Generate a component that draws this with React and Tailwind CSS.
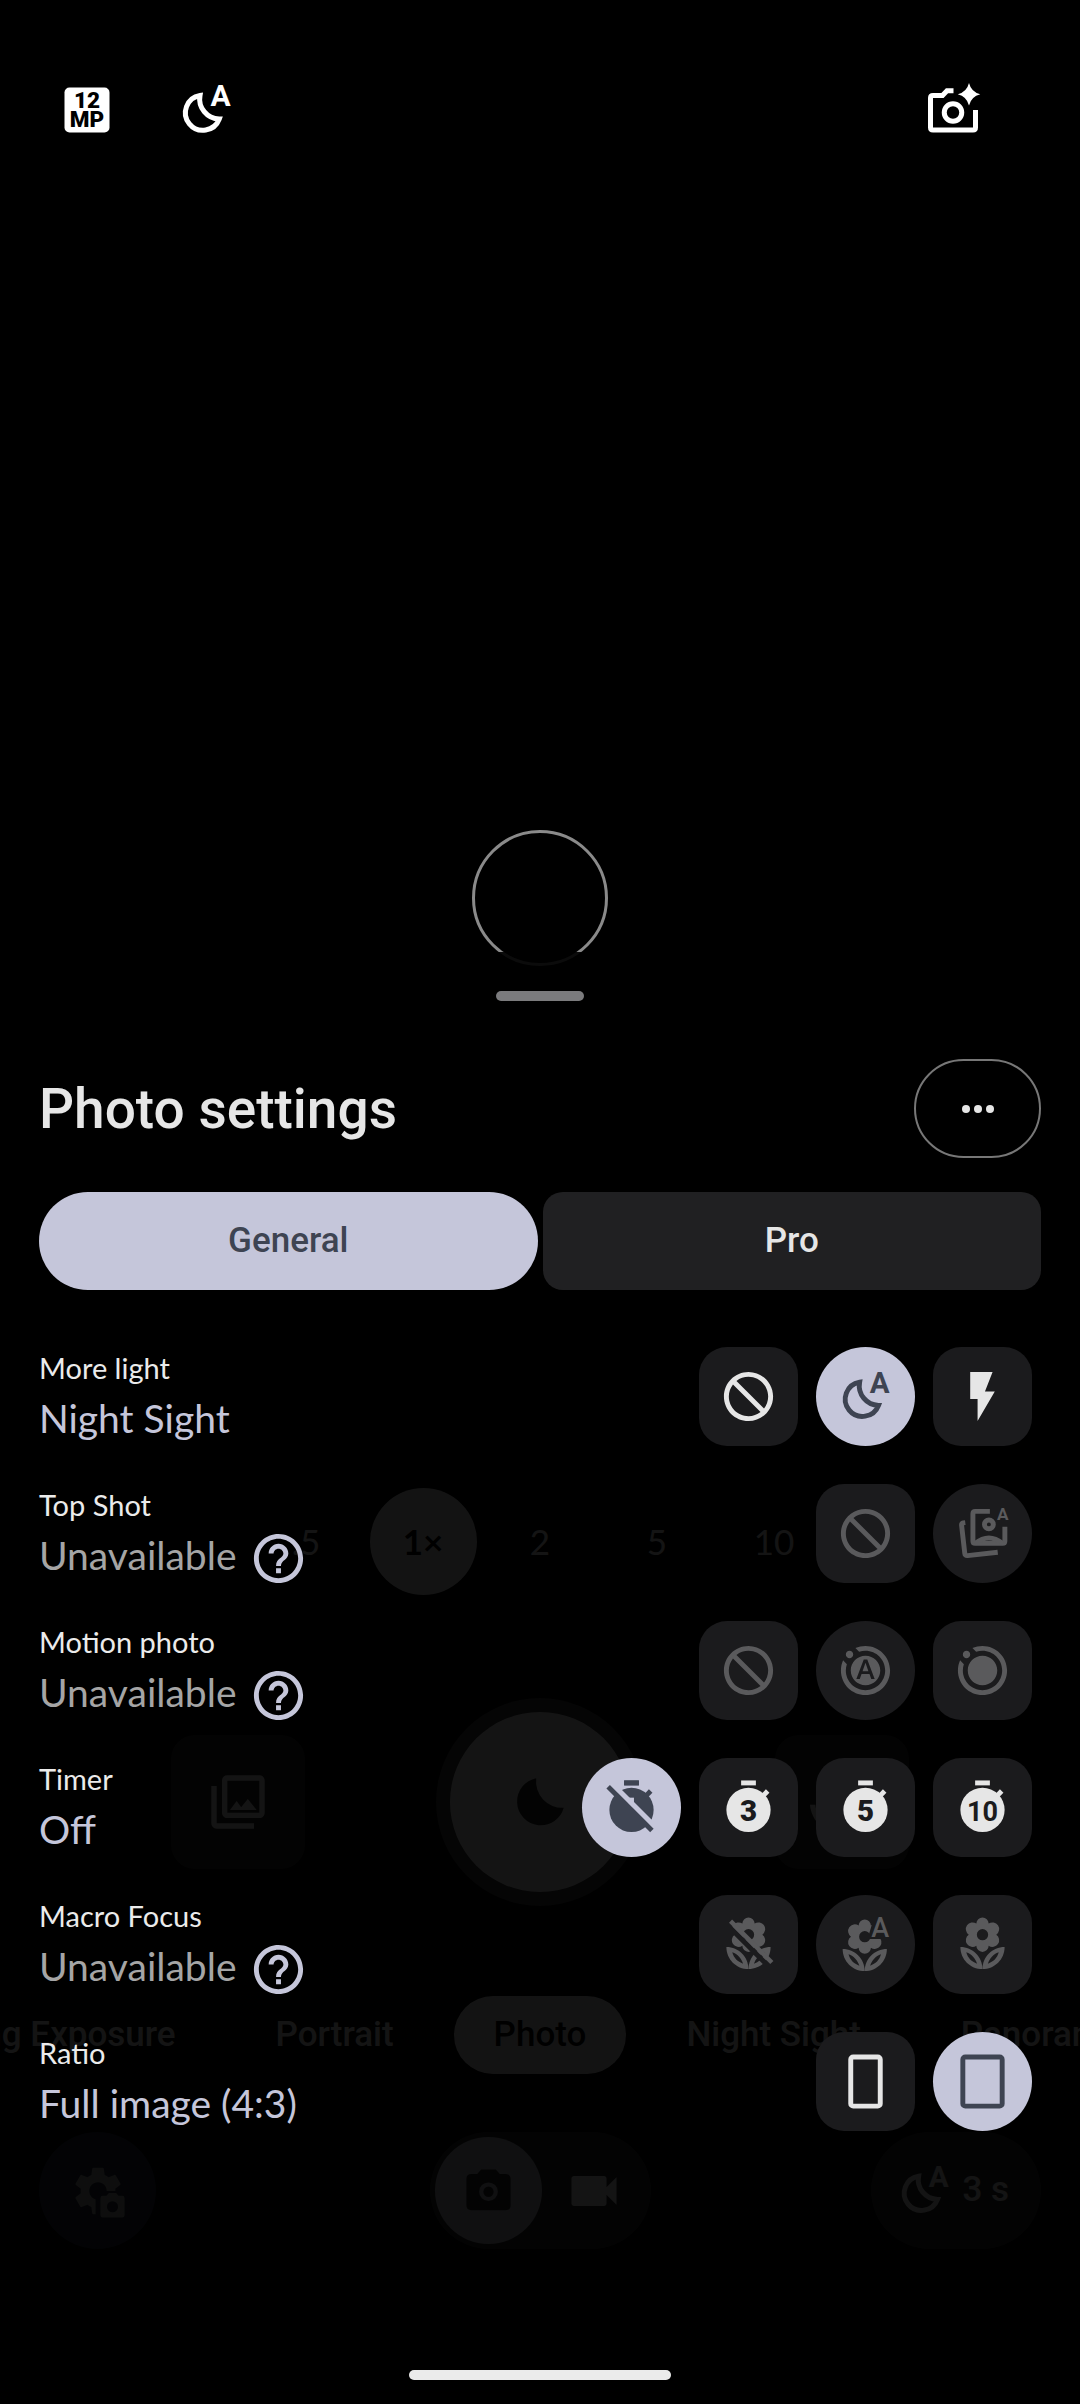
import { useState } from 'react';
import {
  MdBlock,
  MdHelpOutline,
  MdMotionPhotosAuto,
  MdMotionPhotosOn,
  MdOutlineCameraswitch,
  MdOutlinePhotoLibrary,
  MdVideocam,
} from 'react-icons/md';

const GEAR =
  'M19.14 12.94c.04-.3.06-.61.06-.94 0-.32-.02-.64-.07-.94l2.03-1.58c.18-.14.23-.41.12-.61l-1.92-3.32c-.12-.22-.37-.29-.59-.22l-2.39.96c-.5-.38-1.03-.7-1.62-.94l-.36-2.54c-.04-.24-.24-.41-.48-.41h-3.84c-.24 0-.43.17-.47.41l-.36 2.54c-.59.24-1.13.57-1.62.94l-2.39-.96c-.22-.08-.47 0-.59.22L2.74 8.87c-.12.21-.08.47.12.61l2.03 1.58c-.05.3-.09.63-.09.94s.02.64.07.94l-2.03 1.58c-.18.14-.23.41-.12.61l1.92 3.32c.12.22.37.29.59.22l2.39-.96c.5.38 1.03.7 1.62.94l.36 2.54c.05.24.24.41.48.41h3.84c.24 0 .44-.17.47-.41l.36-2.54c.59-.24 1.13-.56 1.62-.94l2.39.96c.22.08.47 0 .59-.22l1.92-3.32c.12-.22.07-.47-.12-.61l-2.01-1.58zM12 15.6c-1.98 0-3.6-1.62-3.6-3.6s1.62-3.6 3.6-3.6 3.6 1.62 3.6 3.6-1.62 3.6-3.6 3.6z';

function Icon({ children, className = 'size-[59px]' }) {
  return (
    <svg viewBox="0 0 24 24" fill="currentColor" className={className} aria-hidden="true">
      {children}
    </svg>
  );
}

function MegapixelIcon({ className }) {
  return (
    <Icon className={className}>
      <rect x="3" y="3" width="18" height="18" rx="2" />
      <g className="fill-black font-[Roboto,sans-serif] text-[9px] font-black" textAnchor="middle">
        <text x="12" y="11.3">12</text>
        <text x="12" y="18.8">MP</text>
      </g>
    </Icon>
  );
}

function NightAutoIcon({ className = 'size-[59px]' }) {
  return (
    <Icon className={className}>
      <path
        d="M9.6 6.2A7 7 0 1 0 17.3 15.6A8 8 0 0 1 9.6 6.2Z"
        fill="none"
        stroke="currentColor"
        strokeWidth="2"
      />
      <text x="17.8" y="10.5" textAnchor="middle" className="font-[Roboto,sans-serif] text-[12px] font-bold">A</text>
    </Icon>
  );
}

function CameraSparkIcon({ className }) {
  return (
    <Icon className={className}>
      <g fill="none" stroke="currentColor" strokeWidth="2">
        <path d="M12.2 4.3H9.6L7.8 6.2H4Q3 6.2 3 7.2V19Q3 20 4 20H20Q21 20 21 19V12" />
        <circle cx="12" cy="13" r="3.5" />
      </g>
      <path d="M18.4 1.2Q19.3 4.8 22.9 5.7Q19.3 6.6 18.4 10.2Q17.5 6.6 13.9 5.7Q17.5 4.8 18.4 1.2Z" />
    </Icon>
  );
}

function FlashIcon() {
  return (
    <Icon>
      <path d="M7 2v11h3v9l7-12h-4l3.1-8z" />
    </Icon>
  );
}

function TopShotAutoIcon() {
  return (
    <Icon>
      <g fill="none" stroke="currentColor" strokeWidth="2">
        <path d="M15 3H9Q8.1 3 8.1 4V15Q8.1 16 9 16H20.2Q21.1 16 21.1 15V9.3" />
        <circle cx="14.6" cy="8.3" r="1.8" />
        <path d="M9 16Q14.6 11.6 20.2 16" />
        <path d="M5 7.6L4.2 7.7Q3.4 7.9 3.5 8.7L4.8 20.1Q4.9 21.1 5.9 21L18.2 19.6" />
      </g>
      <text x="20.2" y="6.6" textAnchor="middle" className="font-[Roboto,sans-serif] text-[7px] font-bold">A</text>
    </Icon>
  );
}

function Stopwatch() {
  return (
    <>
      <rect x="9" y="1" width="6" height="2" />
      <circle cx="12" cy="13" r="9" />
      <path d="M17.2 8L19.8 5.3" stroke="currentColor" strokeWidth="2" />
    </>
  );
}

function TimerIcon({ seconds }) {
  return (
    <Icon>
      <Stopwatch />
      <text
        x="12"
        y="17.3"
        textAnchor="middle"
        className={
          seconds > 9
            ? 'fill-[#1b1b1d] font-[Liberation_Sans_Narrow,Roboto,sans-serif] text-[11px] font-bold'
            : 'fill-[#1b1b1d] font-[Roboto,sans-serif] text-[12px] font-black'
        }
      >
        {seconds}
      </text>
    </Icon>
  );
}

function TimerOffIcon() {
  return (
    <Icon>
      <mask id="timer-off">
        <rect width="24" height="24" fill="white" />
        <path d="M3 1.3L23 21.3" stroke="black" strokeWidth="2.2" />
        <rect x="10.6" y="8" width="2.4" height="4" fill="black" />
      </mask>
      <g mask="url(#timer-off)">
        <Stopwatch />
      </g>
      <rect x="9" y="1" width="6" height="2" />
      <path d="M2.5 3.6L20.3 21.4" stroke="currentColor" strokeWidth="2" />
    </Icon>
  );
}

function Flower() {
  return (
    <>
      <path
        fillRule="evenodd"
        d="M12 1A2.6 2.6 0 0 1 14.5 3.5A2.5 2.5 0 0 1 17.6 8A2.5 2.5 0 0 1 14.5 12.5A2.5 2.5 0 0 1 9.5 12.5A2.5 2.5 0 0 1 6.4 8A2.5 2.5 0 0 1 9.5 3.5A2.6 2.6 0 0 1 12 1ZM12 5.7A2.3 2.3 0 1 0 12 10.3A2.3 2.3 0 1 0 12 5.7Z"
      />
      <path
        fillRule="evenodd"
        d="M12 22C12 17 8 13 3 13C3 18 7 22 12 22ZM5.4 15.2C7.6 16 9.1 17.7 9.8 19.8C7.6 19.1 6 17.5 5.4 15.2Z"
      />
      <path
        fillRule="evenodd"
        d="M12 22C12 17 16 13 21 13C21 18 17 22 12 22ZM18.6 15.2C16.4 16 14.9 17.7 14.2 19.8C16.4 19.1 18 17.5 18.6 15.2Z"
      />
    </>
  );
}

function MacroIcon() {
  return (
    <Icon>
      <Flower />
    </Icon>
  );
}

function MacroAutoIcon() {
  return (
    <Icon>
      <mask id="macro-auto">
        <rect width="24" height="24" fill="white" />
        <path d="M15.800 0H24V9.800H12.800Z" fill="black" />
      </mask>
      <g mask="url(#macro-auto)">
        <g transform="translate(-0.3 0.8)">
          <Flower />
        </g>
      </g>
      <text x="18" y="9" textAnchor="middle" className="font-[Roboto,sans-serif] text-[11px] font-medium">A</text>
    </Icon>
  );
}

function MacroOffIcon() {
  return (
    <Icon>
      <mask id="macro-off">
        <rect width="24" height="24" fill="white" />
        <path d="M3 3.7L21 21.7" stroke="black" strokeWidth="2" />
      </mask>
      <g mask="url(#macro-off)">
        <Flower />
      </g>
      <path d="M4.7 2.5L21.5 19.3" stroke="currentColor" strokeWidth="1.8" />
    </Icon>
  );
}

function RatioIcon({ wide }) {
  return (
    <Icon>
      <rect
        x={wide ? 4 : 6}
        y="2"
        width={wide ? 16 : 12}
        height="20"
        rx="1"
        fill="none"
        stroke="currentColor"
        strokeWidth="2"
      />
    </Icon>
  );
}

function CameraSettingsIcon() {
  return (
    <Icon className="size-[58px]">
      <mask id="gear-cut">
        <rect width="24" height="24" fill="white" />
        <path d="M11 12H24V24H11Z" fill="black" />
      </mask>
      <path d={GEAR} mask="url(#gear-cut)" />
      <path
        fillRule="evenodd"
        d="M14 14h1.5l1-1.2h3l1 1.2H22q1 0 1 1v7q0 1-1 1h-8q-1 0-1-1v-7q0-1 1-1zM18 16.2a2.3 2.3 0 1 0 0 4.6a2.3 2.3 0 1 0 0-4.6z"
      />
    </Icon>
  );
}

function PhotoIcon() {
  return (
    <Icon>
      <path
        fillRule="evenodd"
        d="M9 3.5h6l1.6 1.8H19q2 0 2 2V18q0 2-2 2H5q-2 0-2-2V7.300q0-2 2-2h2.400zM12 8.700a3.800 3.800 0 1 0 0 7.600a3.800 3.800 0 1 0 0-7.600z"
      />
      <circle cx="12" cy="12.5" r="2.1" />
    </Icon>
  );
}

const block = { label: 'Off', icon: <MdBlock className="size-[59px] rotate-90" /> };

const settings = [
  {
    name: 'More light',
    selected: 1,
    values: ['Off', 'Night Sight', 'Flash'],
    options: [block, { label: 'Night Sight', icon: <NightAutoIcon /> }, { label: 'Flash', icon: <FlashIcon /> }],
  },
  {
    name: 'Top Shot',
    selected: 1,
    disabled: true,
    options: [block, { label: 'Auto', icon: <TopShotAutoIcon /> }],
  },
  {
    name: 'Motion photo',
    selected: 1,
    disabled: true,
    options: [
      block,
      { label: 'Auto', icon: <MdMotionPhotosAuto className="size-[59px]" /> },
      { label: 'On', icon: <MdMotionPhotosOn className="size-[59px]" /> },
    ],
  },
  {
    name: 'Timer',
    selected: 0,
    values: ['Off', '3 seconds', '5 seconds', '10 seconds'],
    options: [
      { label: 'Off', icon: <TimerOffIcon /> },
      { label: '3 seconds', icon: <TimerIcon seconds={3} /> },
      { label: '5 seconds', icon: <TimerIcon seconds={5} /> },
      { label: '10 seconds', icon: <TimerIcon seconds={10} /> },
    ],
  },
  {
    name: 'Macro Focus',
    selected: 1,
    disabled: true,
    options: [
      { label: 'Off', icon: <MacroOffIcon /> },
      { label: 'Auto', icon: <MacroAutoIcon /> },
      { label: 'On', icon: <MacroIcon /> },
    ],
  },
  {
    name: 'Ratio',
    selected: 1,
    values: ['Wide crop (16:9)', 'Full image (4:3)'],
    options: [
      { label: 'Wide crop (16:9)', icon: <RatioIcon /> },
      { label: 'Full image (4:3)', icon: <RatioIcon wide /> },
    ],
  },
];

function optionClass(isSelected, disabled) {
  if (disabled) {
    return isSelected
      ? 'rounded-full bg-[#1b1b1d] text-[#5a5a5c]'
      : 'rounded-[28px] bg-[#1b1b1d] text-[#5a5a5c]';
  }
  return isSelected
    ? 'rounded-full bg-[#c5c6da] text-[#3e4452]'
    : 'rounded-[28px] bg-[#1b1b1d] text-[#e6e6e6]';
}

function SettingRow({ setting }) {
  const [selected, setSelected] = useState(setting.selected);

  return (
    <div className="flex h-[99px] items-center justify-between">
      <div>
        <p className="text-[29px] leading-[42px] text-[#ebebeb]">{setting.name}</p>
        {setting.disabled ? (
          <div className="flex items-end gap-3 text-[39px] leading-[58px] text-[#a5a5a5]">
            Unavailable
            <button aria-label={`Why is ${setting.name} unavailable?`} className="text-[#c5c6da]">
              <MdHelpOutline className="-my-1 size-[59px]" />
            </button>
          </div>
        ) : (
          <p className="text-[39px] leading-[58px] text-[#c5c6da]">{setting.values[selected]}</p>
        )}
      </div>
      <div className="flex gap-[18px]">
        {setting.options.map((option, i) => (
          <button
            key={option.label}
            aria-label={`${setting.name}: ${option.label}`}
            aria-pressed={i === selected}
            disabled={setting.disabled}
            onClick={() => setSelected(i)}
            className={`flex size-[99px] items-center justify-center ${optionClass(i === selected, setting.disabled)}`}
          >
            {option.icon}
          </button>
        ))}
      </div>
    </div>
  );
}

function CameraScreen() {
  return (
    <div className="text-[35px] text-white">
      <header className="flex items-center px-[57px] pt-20 pb-[38px]">
        <MegapixelIcon className="size-[60px]" />
        <NightAutoIcon className="ml-[59px] size-[60px]" />
        <CameraSparkIcon className="mr-10 ml-auto size-[60px]" />
      </header>

      {/* viewfinder */}
      <div className="relative flex aspect-[3/4] items-center justify-center">
        <div className="size-[136px] rounded-full border-3 border-[#8a8a8a]" />
        <div className="absolute inset-x-0 bottom-[23px] flex items-center justify-center">
          <button className="w-[117px]">.5</button>
          <button className="mx-[5px] size-[107px] rounded-full bg-[#f0f0f0] font-bold text-black">1×</button>
          <button className="w-[117px]">2</button>
          <button className="w-[117px]">5</button>
          <button className="w-[117px]">10</button>
        </div>
      </div>

      <div className="mt-20 flex items-center justify-center gap-[131px]">
        <button aria-label="Gallery" className="flex size-[134px] items-center justify-center rounded-3xl bg-[#303030]">
          <MdOutlinePhotoLibrary className="size-16" />
        </button>
        <button aria-label="Take photo" className="rounded-full bg-[#404040] p-3.5">
          <span className="flex size-[180px] items-center justify-center rounded-full bg-white text-[#303030]">
            <Icon className="size-[60px]">
              <path d="M10.5 2.5A9.5 9.5 0 1 0 21.5 14.3A10.5 10.5 0 0 1 10.5 2.5Z" />
            </Icon>
          </span>
        </button>
        <button aria-label="Switch camera" className="flex size-[134px] items-center justify-center rounded-3xl bg-[#303030]">
          <MdOutlineCameraswitch className="size-16" />
        </button>
      </div>

      <nav className="mt-[90px] grid grid-cols-[1fr_auto_1fr] items-center gap-5 overflow-hidden font-[Roboto,sans-serif] font-medium whitespace-nowrap">
        <div className="flex min-w-0 justify-end gap-5">
          <button className="px-10">Long Exposure</button>
          <button className="px-10">Portrait</button>
        </div>
        <button className="h-[78px] rounded-full bg-[#f0f0f0] px-10 text-black">Photo</button>
        <div className="flex min-w-0 gap-5">
          <button className="px-10">Night Sight</button>
          <button className="px-10">Panorama</button>
        </div>
      </nav>

      <div className="mt-[58px] grid grid-cols-[1fr_auto_1fr] items-center px-[39px]">
        <button
          aria-label="Camera settings"
          className="flex size-[117px] items-center justify-center rounded-full bg-[#263040] text-[#b0b0b0]"
        >
          <CameraSettingsIcon />
        </button>
        <div className="flex h-[117px] items-center rounded-full bg-[#303030] p-[5px]">
          <button
            aria-label="Photo mode"
            className="flex size-[107px] items-center justify-center rounded-full bg-[#c8ccd8] text-[#303030]"
          >
            <PhotoIcon />
          </button>
          <button aria-label="Video mode" className="flex w-[104px] justify-center">
            <MdVideocam className="size-[60px]" />
          </button>
        </div>
        <button className="flex h-[117px] items-center gap-2 justify-self-end rounded-full bg-[#303030] pr-8 pl-6 font-[Roboto,sans-serif] font-medium">
          <NightAutoIcon />
          3 s
        </button>
      </div>
    </div>
  );
}

export default function App() {
  const [tab, setTab] = useState('General');

  return (
    <div className="relative min-h-screen overflow-hidden bg-black font-[Lato,sans-serif]">
      <CameraScreen />

      {/* settings sheet */}
      <section className="absolute inset-x-0 bottom-0 bg-black/92 pt-[39px] pb-6">
        <div className="mx-auto h-2.5 w-[88px] rounded-full bg-[#7b7b7d]" />

        <div className="mx-[39px] mt-[58px] flex items-center justify-between">
          <h1 className="font-[Roboto,sans-serif] text-[55px] leading-[64px] font-medium text-[#e6e6e6]">
            Photo settings
          </h1>
          <button
            aria-label="More settings"
            className="flex h-[99px] w-[127px] items-center justify-center gap-[4px] rounded-full border-2 border-[#777777]"
          >
            <span className="size-2 rounded-full bg-[#e6e6e6]" />
            <span className="size-2 rounded-full bg-[#e6e6e6]" />
            <span className="size-2 rounded-full bg-[#e6e6e6]" />
          </button>
        </div>

        <div className="mx-[39px] mt-[34px] grid grid-cols-2 gap-[5px]">
          {['General', 'Pro'].map(name => (
            <button
              key={name}
              aria-pressed={tab === name}
              onClick={() => setTab(name)}
              className={`h-[98px] font-[Roboto,sans-serif] text-[35px] font-medium ${
                tab === name
                  ? 'rounded-full bg-[#c5c6da] text-[#3e4452]'
                  : 'rounded-[20px] bg-[#202022] text-[#e6e6e6]'
              }`}
            >
              {name}
            </button>
          ))}
        </div>

        <div className="mt-[57px] mr-12 ml-[39px] flex flex-col gap-[38px]">
          {settings.map(setting => (
            <SettingRow key={setting.name} setting={setting} />
          ))}
        </div>

        <div className="mx-auto mt-[239px] h-2.5 w-[262px] rounded-full bg-[#ebebeb]" />
      </section>
    </div>
  );
}
